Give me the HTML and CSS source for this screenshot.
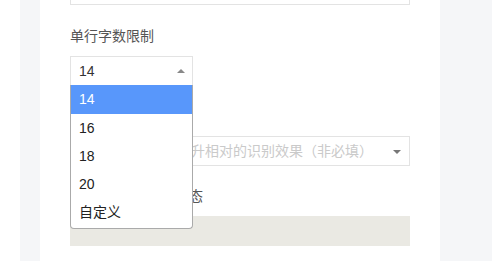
FILE: index.html
```html
<!DOCTYPE html>
<html>
<head>
<meta charset="utf-8">
<link rel="stylesheet" href="styles.css">
<title>设置</title>
</head>
<body>
<div class="page">
  <div class="gutter"></div>
  <div class="side"></div>
  <div class="panel">
    <div class="group top">
      <div class="input"></div>
    </div>
    <div class="group">
      <div class="label">单行字数限制</div>
      <div class="select small open">
        <span class="value">14</span>
        <span class="arrow up"></span>
        <ul class="options">
          <li class="active">14</li>
          <li>16</li>
          <li>18</li>
          <li>20</li>
          <li>自定义</li>
        </ul>
      </div>
    </div>
    <div class="group">
      <div class="label">识别场景</div>
      <div class="select wide">
        <span class="value placeholder">选择识别场景以提升相对的识别效果（非必填）</span>
        <span class="arrow down"></span>
      </div>
    </div>
    <div class="group">
      <div class="label">是否开启 AI 识别状态</div>
      <div class="input disabled"></div>
    </div>
  </div>
  <div class="aside"></div>
</div>
</body>
</html>
```
FILE: styles.css
```css
html, body {
  margin: 0;
  padding: 0;
  background-color: white;
  font-family: "Liberation Sans", Arial, "Noto Sans CJK SC", sans-serif;
  font-size: 14px;
  color: #333;
}
.page {
  display: flex;
  height: 261px;
  overflow: hidden;
}
.gutter {
  width: 20px;
}
.side {
  width: 20px;
  background-color: #f5f6f8;
}
.panel {
  width: 340px;
  padding: 0 30px;
  background-color: white;
}
.aside {
  flex: 1;
  background-color: #f5f6f8;
}
.group {
  margin-bottom: 20px;
}
.group.top {
  margin-top: -25px;
  margin-bottom: 21px;
}
.input {
  height: 28px;
  border: 1px solid #e3e3e3;
  background-color: white;
}
.input.disabled {
  background-color: #eae9e3;
  border-color: #eae9e3;
}
.label {
  height: 20px;
  line-height: 20px;
  margin-bottom: 10px;
  color: #555;
}
.select {
  position: relative;
  height: 28px;
  line-height: 28px;
  border: 1px solid #e3e3e3;
  background-color: white;
}
.select.small {
  width: 121px;
}
.select .value {
  padding-left: 8px;
  white-space: nowrap;
}
.select .placeholder {
  color: #cacaca;
}
.arrow {
  position: absolute;
  right: 7px;
  top: 13px;
  width: 0;
  height: 0;
  border-left: 4px solid transparent;
  border-right: 4px solid transparent;
}
.arrow.up {
  top: 12px;
  border-bottom: 4px solid #888;
}
.arrow.down {
  right: 8px;
  border-top: 4px solid #777;
}
.options {
  position: absolute;
  z-index: 2;
  left: -1px;
  top: 28px;
  width: 121px;
  margin: 0;
  padding: 0 0 2px 0;
  list-style: none;
  background-color: white;
  border: 1px solid #aaa;
  border-top: none;
  border-radius: 0 0 4px 4px;
}
.options li {
  height: 28px;
  line-height: 28px;
  padding-left: 8px;
  color: #222;
}
.options li:first-child {
  height: 29px;
  line-height: 29px;
}
.options li.active {
  background-color: #5897fb;
  color: white;
}
```
